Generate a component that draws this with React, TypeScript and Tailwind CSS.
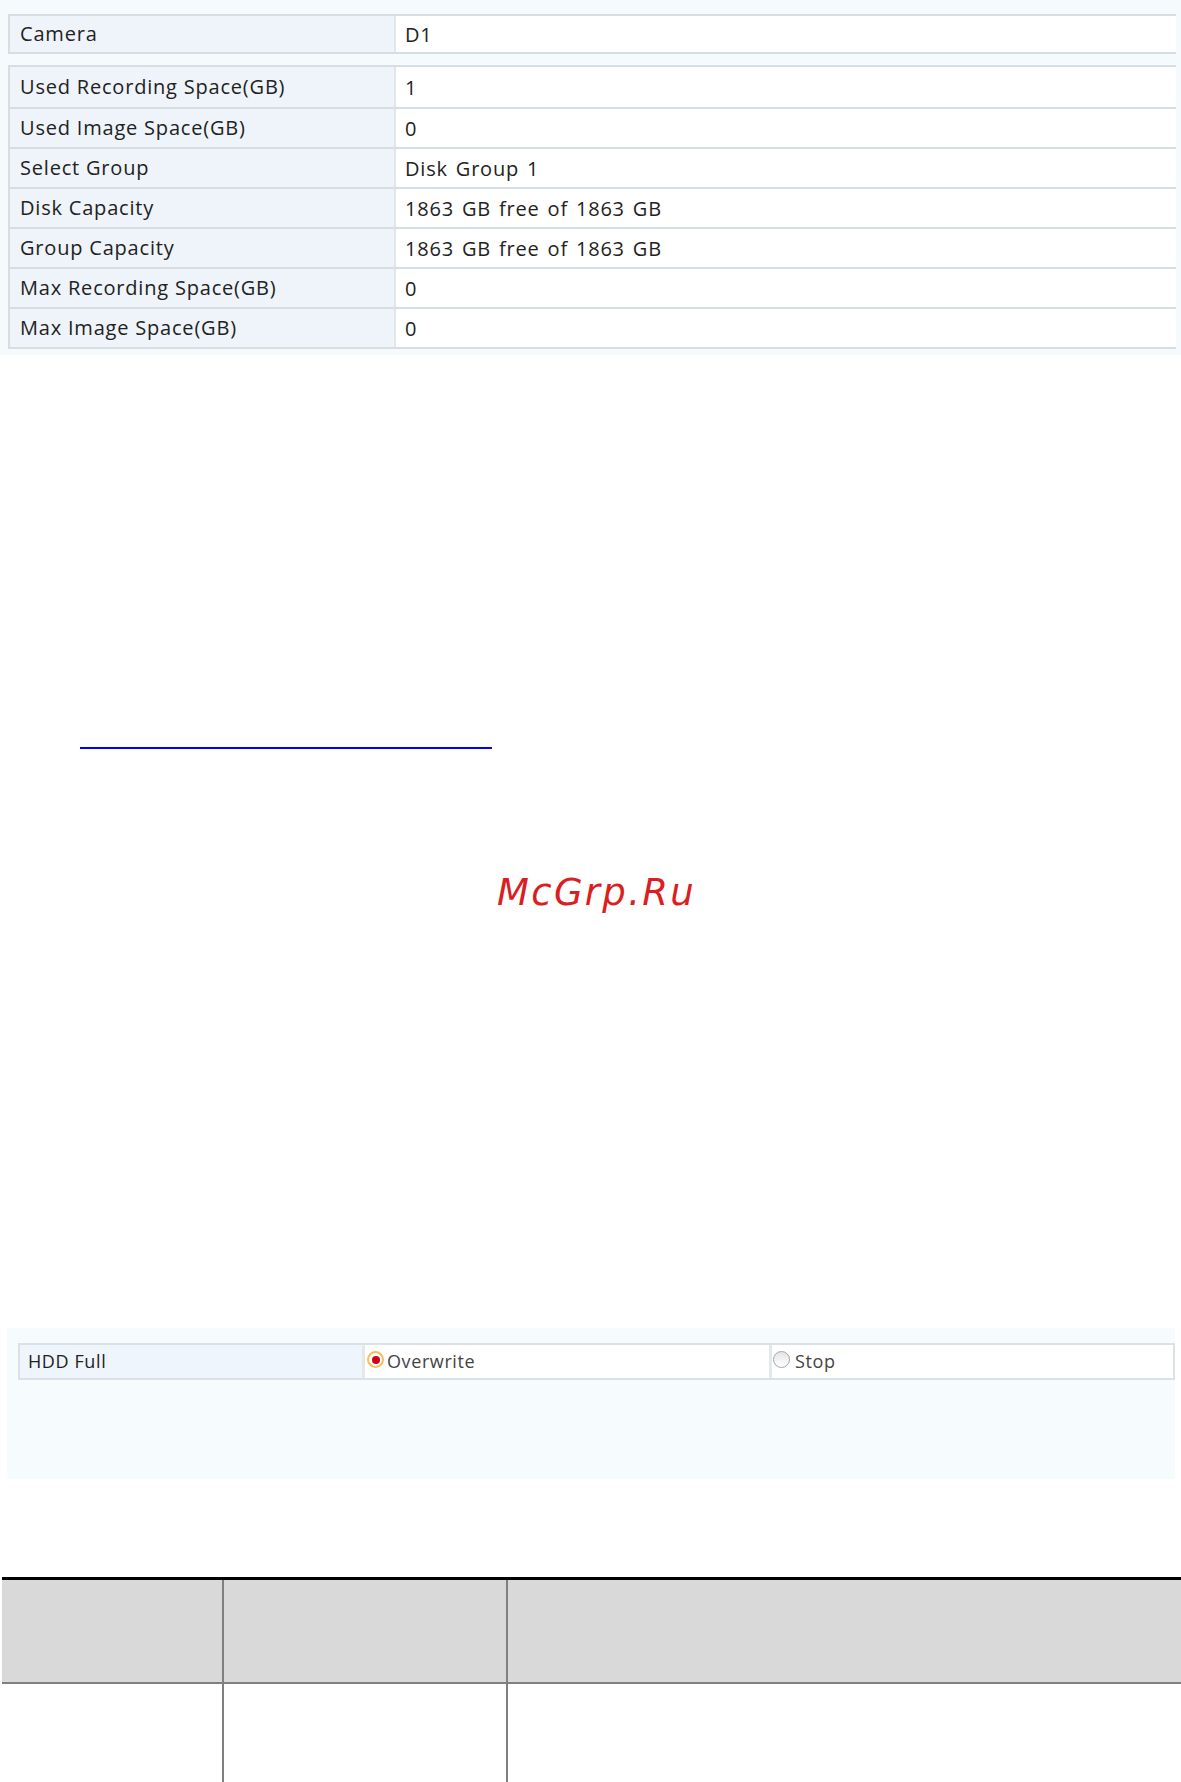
const font = { fontFamily: '"Open Sans", "Noto Sans", sans-serif' }

type Row = { label: string; value: string }

const rows: Row[] = [
  { label: "Used Recording Space(GB)", value: "1" },
  { label: "Used Image Space(GB)", value: "0" },
  { label: "Select Group", value: "Disk Group 1" },
  { label: "Disk Capacity", value: "1863 GB free of 1863 GB" },
  { label: "Group Capacity", value: "1863 GB free of 1863 GB" },
  { label: "Max Recording Space(GB)", value: "0" },
  { label: "Max Image Space(GB)", value: "0" },
]

function InfoRow({ row, first, h }: { row: Row; first?: boolean; h: string }) {
  return (
    <div className={`flex ${h} ${first ? "" : "border-t-2 border-[#d6dde3]"}`}>
      <div className="w-[384px] shrink-0 bg-[#eef4fa] pl-[10px] flex items-center text-[20px] tracking-[0.8px] text-[#222]">
        {row.label}
      </div>
      <div className="flex-1 bg-white border-l-2 border-[#e1e6ea] pl-[9px] pt-[2px] flex items-center text-[20px] tracking-[0.8px] [word-spacing:2px] text-[#222]">
        {row.value}
      </div>
    </div>
  )
}

function Radio({ checked }: { checked?: boolean }) {
  return checked ? (
    <span className="w-[17px] h-[17px] rounded-full border-2 border-[#f0c05a] bg-white flex items-center justify-center shrink-0 -mt-[4px]">
      <span className="w-[8px] h-[8px] rounded-full bg-[#d4001a]" />
    </span>
  ) : (
    <span className="w-[17px] h-[17px] rounded-full border-[1.5px] border-[#a2a6aa] bg-gradient-to-b from-[#e4e4e4] to-white shrink-0 -mt-[4px]" />
  )
}

export default function App() {
  return (
    <div className="w-[1181px] h-[1782px] bg-white overflow-hidden relative" style={font}>
      {/* record info panel */}
      <div className="bg-[#f5fafd] pt-[14px] pl-[8px] pr-[5px] pb-[6px]">
        <div className="border-y-2 border-l-2 border-[#d6dde3]">
          <InfoRow row={{ label: "Camera", value: "D1" }} first h="h-[36px]" />
        </div>
        <div className="mt-[11px] border-y-2 border-l-2 border-[#d6dde3]">
          {rows.map((r, i) => (
            <InfoRow key={r.label} row={r} first={i === 0} h="h-[40px]" />
          ))}
        </div>
      </div>

      {/* link line */}
      <div className="mt-[392px] ml-[80px] w-[412px] h-[2px] bg-[#0000ff]" />

      {/* watermark */}
      <div className="mt-[122px] pl-[12px] text-center">
        <span
          className="italic text-[37px] leading-[44px] tracking-[2.3px] text-[#d91f1f]"
          style={{ fontFamily: '"DejaVu Sans", sans-serif' }}
        >
          McGrp.Ru
        </span>
      </div>

      {/* HDD full panel */}
      <div className="mt-[413px] ml-[7px] w-[1168px] h-[151px] bg-[#f6fbfe] pt-[15px] pl-[11px]">
        <div className="flex h-[37px] border-2 border-[#dae2e8] text-[18px] tracking-[0.6px]">
          <div className="w-[342px] shrink-0 bg-[#eef5fc] pl-[8px] flex items-center text-[#222]">HDD Full</div>
          <div className="w-[407px] shrink-0 bg-white border-l-[3px] border-[#e3e8eb] pl-[2px] flex items-center gap-[3px] text-[#444]">
            <Radio checked />
            <span>Overwrite</span>
          </div>
          <div className="flex-1 bg-white border-l-[3px] border-[#e3e8eb] pl-[1px] flex items-center gap-[5px] text-[#444]">
            <Radio />
            <span>Stop</span>
          </div>
        </div>
      </div>

      {/* bottom table */}
      <div className="absolute left-[2px] right-0 top-[1577px] bottom-0 border-t-[3px] border-black">
        <div className="flex h-[104px] bg-[#d9d9d9] border-b-2 border-[#808080]">
          <div className="w-[222px] shrink-0 border-r-2 border-[#808080]" />
          <div className="w-[284px] shrink-0 border-r-2 border-[#808080]" />
          <div className="flex-1" />
        </div>
        <div className="flex h-full">
          <div className="w-[222px] shrink-0 border-r-2 border-[#808080]" />
          <div className="w-[284px] shrink-0 border-r-2 border-[#808080]" />
          <div className="flex-1" />
        </div>
      </div>
    </div>
  )
}
